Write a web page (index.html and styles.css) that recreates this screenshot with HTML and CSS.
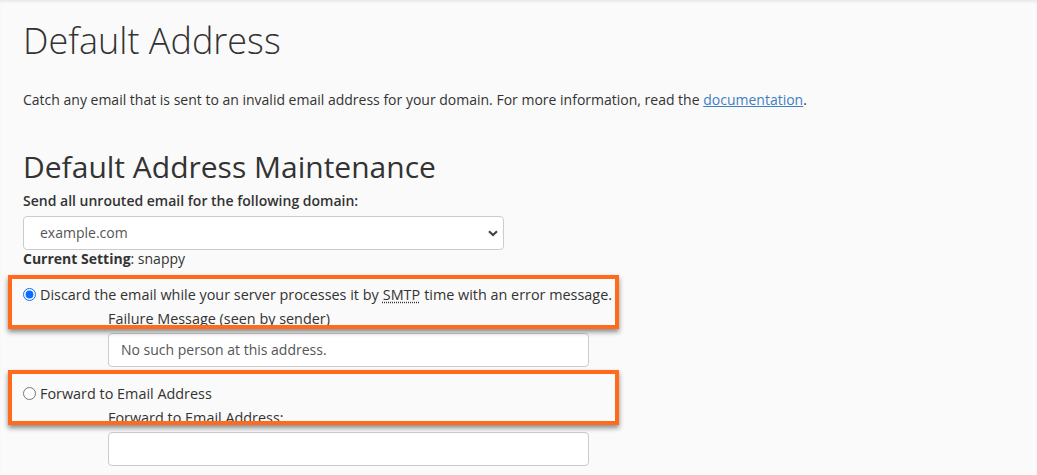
FILE: index.html
```html
<!DOCTYPE html>
<html lang="en">
<head>
<meta charset="utf-8">
<title>Default Address</title>
<link rel="stylesheet" href="styles.css">
</head>
<body>
<div class="page">
  <h1 class="title">Default Address</h1>
  <p class="intro">Catch any email that is sent to an invalid email address for your domain. For more information, read the <a href="#" class="link">documentation</a>.</p>

  <h2 class="subtitle">Default Address Maintenance</h2>
  <label class="field-label" for="domain">Send all unrouted email for the following domain:</label>
  <div class="select-wrap">
    <select id="domain" class="select">
      <option>example.com</option>
    </select>
    <svg class="chevron" width="10" height="7" viewBox="0 0 10 7"><path d="M1 1.2 L5 5 L9 1.2" fill="none" stroke="#444" stroke-width="2.2"/></svg>
  </div>
  <div class="current"><strong>Current Setting</strong>: snappy</div>

  <div class="option option-first">
    <label class="radio-row"><input type="radio" name="mode" class="radio" checked>Discard the email while your server processes it by <abbr title="Simple Mail Transfer Protocol" class="abbr">SMTP</abbr> time with an error message.</label>
    <div class="sub-label">Failure Message (seen by sender)</div>
    <input type="text" class="text-input" value="No such person at this address.">
  </div>

  <div class="option">
    <label class="radio-row"><input type="radio" name="mode" class="radio">Forward to Email Address</label>
    <div class="sub-label">Forward to Email Address:</div>
    <input type="text" class="text-input" value="">
  </div>

  <div class="highlight highlight-one"></div>
  <div class="highlight highlight-two"></div>
</div>
</body>
</html>
```

FILE: styles.css
```css
* { box-sizing: border-box; }

html, body {
  margin: 0;
  padding: 0;
  background: #fafafa;
}

body {
  font-family: "Open Sans", "Noto Sans", sans-serif;
  font-size: 14px;
  line-height: 20px;
  color: #333;
}

.page {
  position: relative;
  min-height: 475px;
  padding: 21px 0 0 23px;
  box-shadow: inset 0 3px 3px -1px rgba(0, 0, 0, 0.07);
}

.title {
  margin: 0;
  font-size: 36px;
  font-weight: 300;
  line-height: 39.6px;
  color: #333;
}

.intro {
  margin: 29px 0 0 0;
}

.link {
  color: #3f7fc2;
  text-decoration: underline;
}

.subtitle {
  margin: 40px 0 0 0;
  font-size: 30px;
  font-weight: 400;
  line-height: 33px;
  color: #333;
}

.field-label {
  display: block;
  margin-top: 8px;
  font-weight: 600;
}

.select-wrap {
  position: relative;
  width: 481px;
  margin-top: 5px;
}

.select {
  display: block;
  width: 100%;
  height: 34px;
  padding: 0 30px 0 16px;
  border: 1px solid #ccc;
  border-radius: 4px;
  background: #fff;
  font-family: inherit;
  font-size: 14px;
  color: #555;
  -webkit-appearance: none;
  appearance: none;
}

.chevron {
  position: absolute;
  right: 6px;
  top: 14px;
}

.current {
  margin-top: -1px;
}

.current strong {
  font-weight: 700;
}

.option {
  margin-top: 17px;
}

.option-first {
  margin-top: 16px;
}

.radio-row {
  display: flex;
  align-items: center;
  height: 20px;
  font-size: 14.4px;
}

.radio {
  width: 13px;
  height: 13px;
  margin: 0 4px 0 0;
  accent-color: #0a6cff;
}

.abbr {
  text-decoration: underline dotted;
  text-underline-offset: 2px;
  margin: 0 4px;
}

.sub-label {
  margin: 4px 0 0 85px;
  font-size: 14.4px;
}

.text-input {
  display: block;
  width: 481px;
  height: 34px;
  margin: 4px 0 0 85px;
  padding: 0 12px;
  border: 1px solid #ccc;
  border-radius: 4px;
  background: #fff;
  font-family: inherit;
  font-size: 14px;
  color: #555;
}

.highlight {
  position: absolute;
  left: 8px;
  width: 611px;
  border: 4px solid #ff6a1c;
  box-shadow: 0 3px 5px rgba(0, 0, 0, 0.45);
  pointer-events: none;
}

.highlight-one {
  top: 275px;
  height: 54px;
}

.highlight-two {
  top: 370px;
  height: 55px;
}
```
